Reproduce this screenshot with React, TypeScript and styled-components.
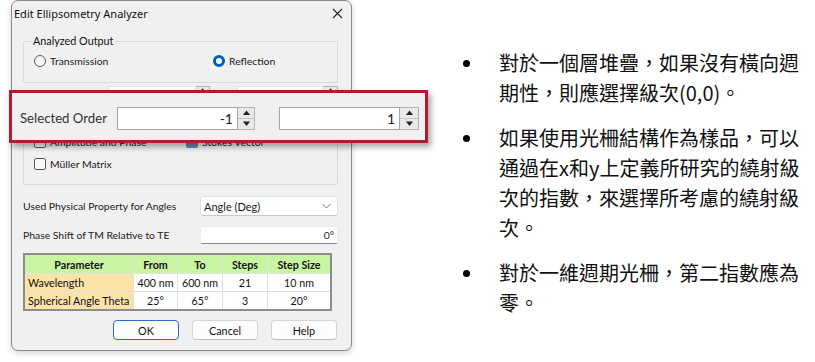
import React from "react";
import styled, { createGlobalStyle, css } from "styled-components";

const GlobalStyle = createGlobalStyle`
  html, body { margin: 0; padding: 0; background: #ffffff; }
  body { width: 815px; height: 362px; overflow: hidden; }
`;

const UI = `Lato, "Noto Sans", sans-serif`;
const TITLE = `"Noto Sans", Lato, sans-serif`;
const CJK = `"Noto Sans CJK TC", "Noto Sans", sans-serif`;
const FS = 10.4;

const Page = styled.div`
  position: relative;
  display: flex;
  align-items: flex-start;
  width: 815px;
  height: 362px;
  padding-left: 11px;
  box-sizing: border-box;
  font-family: ${UI};
`;

const Dialog = styled.div`
  width: 341px;
  height: 351px;
  box-sizing: border-box;
  background: #f0f0f0;
  border: 1px solid #8a8a8a;
  border-radius: 7px;
  display: flex;
  flex-direction: column;
  font-size: ${FS}px;
  color: #1a1a1a;
  box-shadow: 0 2px 6px rgba(0, 0, 0, 0.18);
  white-space: nowrap;
`;

const TitleBar = styled.div`
  height: 24px;
  display: flex;
  align-items: center;
  justify-content: space-between;
  padding: 0 8px 0 2px;
  font-family: ${TITLE};
  font-size: 11px;
  color: #111;
`;

const Body = styled.div`
  display: flex;
  flex-direction: column;
  padding: 0 13px 0 11px;
`;

const Group = styled.fieldset<{ $top: number }>`
  margin: ${(p) => p.$top}px 0 0 0;
  padding: 0 10px;
  min-width: 0;
  border: 1px solid #d9d9d9;
  border-radius: 2px;
`;

const Legend = styled.legend<{ $lh?: number }>`
  padding: 0 2px;
  margin-left: -3px;
  font-size: ${FS + 0.4}px;
  line-height: ${(p) => p.$lh ?? 14}px;
  color: #111;
`;

const RadioRow = styled.div`
  display: flex;
  align-items: center;
  height: 14px;
  padding: 6px 0 14px 0;
`;

const RadioItem = styled.label<{ $width?: number }>`
  display: flex;
  align-items: center;
  gap: 4px;
  width: ${(p) => (p.$width ? `${p.$width}px` : "auto")};
`;

const RadioDot = styled.span<{ $checked?: boolean }>`
  width: 12px;
  height: 12px;
  border-radius: 50%;
  box-sizing: border-box;
  ${(p) =>
    p.$checked
      ? css`
          background: #ffffff;
          border: 3.5px solid #005fb8;
        `
      : css`
          background: #f7f7f7;
          border: 1px solid #5a5a5a;
        `}
`;

const CheckRows = styled.div`
  display: flex;
  flex-direction: column;
  gap: 8px;
  padding: 0 0 13px 0;
`;

const CheckItem = styled.label<{ $width?: number }>`
  display: flex;
  align-items: center;
  gap: 4px;
  height: 14px;
  width: ${(p) => (p.$width ? `${p.$width}px` : "auto")};
`;

const CheckLine = styled.div`
  display: flex;
  align-items: center;
`;

const CheckBox = styled.span<{ $checked?: boolean }>`
  width: 12px;
  height: 12px;
  box-sizing: border-box;
  border-radius: 2px;
  border: 1px solid ${(p) => (p.$checked ? "#6d84a8" : "#5a5a5a")};
  background: ${(p) => (p.$checked ? "#6d84a8" : "#f7f7f7")};
`;

const HiddenRow = styled.div`
  display: flex;
  align-items: center;
  height: 17px;
  margin-top: 3px;
  padding-left: 85px;
`;

const FieldRow = styled.div<{ $top: number; $h: number }>`
  display: flex;
  align-items: center;
  justify-content: space-between;
  margin-top: ${(p) => p.$top}px;
  height: ${(p) => p.$h}px;
`;

const FieldLabel = styled.span`
  color: #1a1a1a;
`;

const Select = styled.div`
  width: 138px;
  height: 20px;
  box-sizing: border-box;
  background: #ffffff;
  border: 1px solid #e3e3e3;
  border-bottom-color: #c8c8c8;
  border-radius: 3px;
  display: flex;
  align-items: center;
  justify-content: space-between;
  padding: 0 6px 0 3px;
  font-size: ${FS + 0.6}px;
`;

const TextBox = styled.div`
  width: 138px;
  height: 18px;
  box-sizing: border-box;
  background: #ffffff;
  border: 1px solid #ececec;
  border-bottom: 1px solid #8a8a8a;
  border-radius: 2px;
  display: flex;
  align-items: center;
  justify-content: flex-end;
  padding-right: 3px;
`;

const Table = styled.table`
  margin-top: 9px;
  width: 301px;
  border-collapse: collapse;
  border: 2px solid #8c8c8c;
  font-size: ${FS + 0.3}px;
  table-layout: fixed;
`;

const Th = styled.th<{ $w: number }>`
  width: ${(p) => p.$w}px;
  height: 18px;
  padding: 0;
  background: #c9f5a2;
  border: 1px solid #e2e2e2;
  font-weight: 700;
  text-align: center;
  color: #111;
`;

const Td = styled.td<{ $head?: boolean }>`
  height: 17px;
  padding: 0 ${(p) => (p.$head ? "3px" : "0")};
  border: 1px solid #e0e0e0;
  background: ${(p) => (p.$head ? "#fde3a8" : "#ffffff")};
  text-align: ${(p) => (p.$head ? "left" : "center")};
  white-space: nowrap;
  color: #111;
`;

const Buttons = styled.div`
  display: flex;
  justify-content: flex-end;
  gap: 13px;
  margin-top: 9px;
  padding-right: 1px;
`;

const Button = styled.button<{ $primary?: boolean }>`
  width: 66px;
  height: 20px;
  box-sizing: border-box;
  font-family: ${UI};
  font-size: ${FS + 0.4}px;
  color: #111;
  background: #fdfdfd;
  border: 1px solid ${(p) => (p.$primary ? "#2a6fc0" : "#d5d5d5")};
  border-bottom-color: ${(p) => (p.$primary ? "#2a6fc0" : "#bcbcbc")};
  border-radius: 4px;
  padding: 0;
`;

const Spin = styled.div<{ $h: number }>`
  display: flex;
  height: ${(p) => p.$h}px;
`;

const SpinInput = styled.div<{ $w: number; $fs: number; $muted?: boolean }>`
  width: ${(p) => p.$w}px;
  height: 100%;
  box-sizing: border-box;
  background: #ffffff;
  border: 1px solid ${(p) => (p.$muted ? "#e4e4e4" : "#a6a6a6")};
  display: flex;
  align-items: center;
  justify-content: flex-end;
  padding-right: 4px;
  font-size: ${(p) => p.$fs}px;
  color: #1a1a1a;
`;

const SpinButtons = styled.div<{ $w: number }>`
  width: ${(p) => p.$w}px;
  height: 100%;
  display: flex;
  flex-direction: column;
  box-sizing: border-box;
  border: 1px solid #b4b4b4;
  border-left: none;
  background: #e9e9e9;
`;

const SpinBtn = styled.div`
  flex: 1;
  display: flex;
  align-items: center;
  justify-content: center;
  & + & { border-top: 1px solid #c4c4c4; }
`;

const Overlay = styled.div`
  position: absolute;
  left: 9px;
  top: 90px;
  width: 419px;
  height: 53px;
  box-sizing: border-box;
  border: 3px solid #b01b2e;
  background: #f0f0f0;
  box-shadow: 3px 4px 6px rgba(0, 0, 0, 0.35);
  display: flex;
  align-items: center;
  padding: 3px 0 0 8px;
  white-space: nowrap;
`;

const OverlayLabel = styled.span`
  font-size: 13.2px;
  color: #333;
  width: 97px;
`;

const Gap = styled.span<{ $w: number }>`
  width: ${(p) => p.$w}px;
  flex: none;
`;

const TextColumn = styled.ul`
  list-style: none;
  margin: 0 0 0 111px;
  padding: 48px 0 0 0;
  display: flex;
  flex-direction: column;
  gap: 15px;
  font-family: ${CJK};
  font-size: 20px;
  line-height: 30px;
  color: #111;
`;

const Bullet = styled.li`
  display: flex;
  align-items: flex-start;
`;

const Dot = styled.span`
  flex: none;
  width: 7px;
  height: 7px;
  border-radius: 50%;
  background: #000;
  margin: 12px 29px 0 0;
`;

const BulletText = styled.span`
  width: 301px;
`;

const Arrow = ({ up, size }: { up?: boolean; size: number }) => (
  <svg width={size} height={size * 0.6} viewBox="0 0 10 6">
    {up ? <path d="M5 0.5 L9 5.5 L1 5.5 Z" fill="#222" /> : <path d="M1 0.5 L9 0.5 L5 5.5 Z" fill="#222" />}
  </svg>
);

type SpinProps = { value: string; w: number; bw: number; h: number; fs: number; arrow: number; muted?: boolean };

const SpinField = ({ value, w, bw, h, fs, arrow, muted }: SpinProps) => (
  <Spin $h={h}>
    <SpinInput $w={w} $fs={fs} $muted={muted}>{value}</SpinInput>
    <SpinButtons $w={bw}>
      <SpinBtn><Arrow up size={arrow} /></SpinBtn>
      <SpinBtn><Arrow size={arrow} /></SpinBtn>
    </SpinButtons>
  </Spin>
);

const rows = [
  ["Wavelength", "400 nm", "600 nm", "21", "10 nm"],
  ["Spherical Angle Theta", "25°", "65°", "3", "20°"],
];

export default function App() {
  return (
    <Page>
      <GlobalStyle />
      <Dialog>
        <TitleBar>
          <span>Edit Ellipsometry Analyzer</span>
          <svg width="11" height="11" viewBox="0 0 11 11">
            <path d="M1 1 L10 10 M10 1 L1 10" stroke="#222" strokeWidth="1.1" />
          </svg>
        </TitleBar>
        <Body>
          <Group $top={9}>
            <Legend>Analyzed Output</Legend>
            <RadioRow>
              <RadioItem $width={179}>
                <RadioDot />
                Transmission
              </RadioItem>
              <RadioItem>
                <RadioDot $checked />
                Reflection
              </RadioItem>
            </RadioRow>
          </Group>
          <HiddenRow>
            <SpinField value="" w={88} bw={14} h={17} fs={11} arrow={7} muted />
            <Gap $w={27} />
            <SpinField value="" w={86} bw={15} h={17} fs={11} arrow={7} muted />
          </HiddenRow>
          <Group $top={0}>
            <Legend $lh={10}>&nbsp;</Legend>
            <CheckRows>
              <CheckItem>
                <CheckBox />
              </CheckItem>
              <CheckLine>
                <CheckItem $width={152}>
                  <CheckBox />
                  Amplitude and Phase
                </CheckItem>
                <CheckItem>
                  <CheckBox $checked />
                  Stokes Vector
                </CheckItem>
              </CheckLine>
              <CheckItem>
                <CheckBox />
                Müller Matrix
              </CheckItem>
            </CheckRows>
          </Group>
          <FieldRow $top={11} $h={20}>
            <FieldLabel>Used Physical Property for Angles</FieldLabel>
            <Select>
              <span>Angle (Deg)</span>
              <svg width="9" height="6" viewBox="0 0 9 6">
                <path d="M0.5 1 L4.5 5 L8.5 1" fill="none" stroke="#777" strokeWidth="1" />
              </svg>
            </Select>
          </FieldRow>
          <FieldRow $top={10} $h={18}>
            <FieldLabel>Phase Shift of TM Relative to TE</FieldLabel>
            <TextBox>0°</TextBox>
          </FieldRow>
          <Table>
            <thead>
              <tr>
                <Th $w={108}>Parameter</Th>
                <Th $w={43}>From</Th>
                <Th $w={44}>To</Th>
                <Th $w={44}>Steps</Th>
                <Th $w={62}>Step Size</Th>
              </tr>
            </thead>
            <tbody>
              {rows.map((r) => (
                <tr key={r[0]}>
                  {r.map((c, i) => (
                    <Td key={i} $head={i === 0}>{c}</Td>
                  ))}
                </tr>
              ))}
            </tbody>
          </Table>
          <Buttons>
            <Button $primary>OK</Button>
            <Button>Cancel</Button>
            <Button>Help</Button>
          </Buttons>
        </Body>
      </Dialog>

      <Overlay>
        <OverlayLabel>Selected Order</OverlayLabel>
        <SpinField value="-1" w={121} bw={17} h={23} fs={14} arrow={9} />
        <Gap $w={24} />
        <SpinField value="1" w={121} bw={19} h={23} fs={14} arrow={9} />
      </Overlay>

      <TextColumn>
        <Bullet>
          <Dot />
          <BulletText>對於一個層堆疊，如果沒有橫向週期性，則應選擇級次(0,0)。</BulletText>
        </Bullet>
        <Bullet>
          <Dot />
          <BulletText>如果使用光柵結構作為樣品，可以通過在x和y上定義所研究的繞射級次的指數，來選擇所考慮的繞射級次。</BulletText>
        </Bullet>
        <Bullet>
          <Dot />
          <BulletText>對於一維週期光柵，第二指數應為零。</BulletText>
        </Bullet>
      </TextColumn>
    </Page>
  );
}
